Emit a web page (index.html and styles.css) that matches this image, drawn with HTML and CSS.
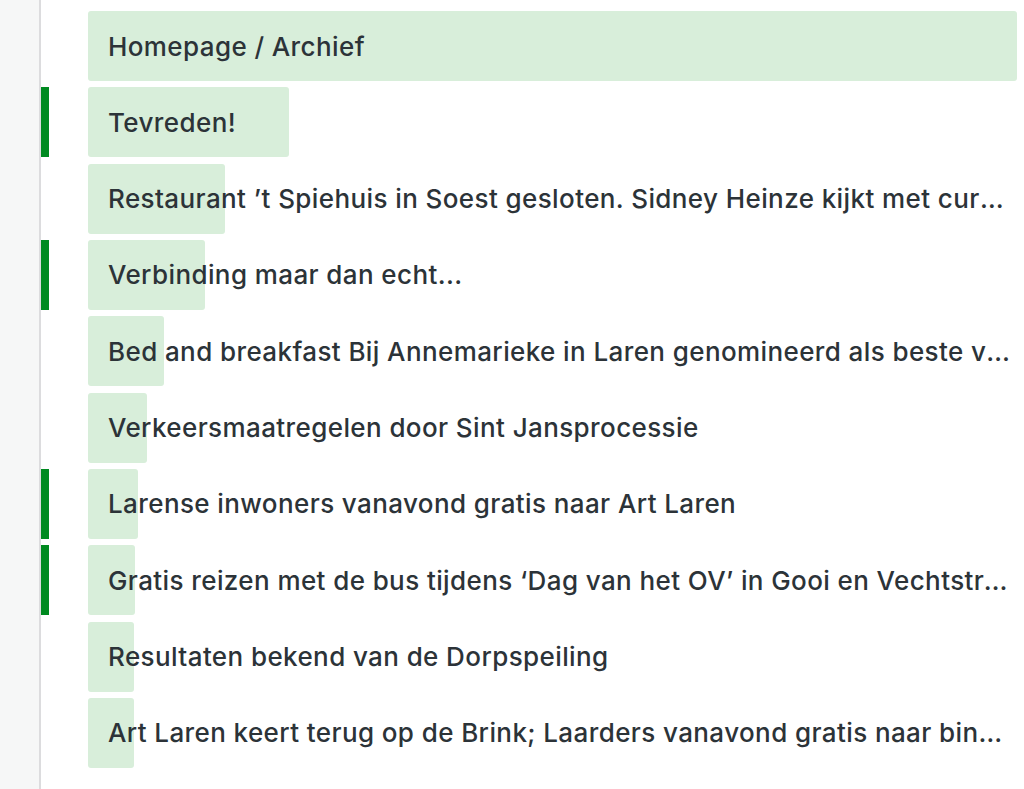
FILE: index.html
```html
<!DOCTYPE html>
<html lang="en">
<head>
    <meta charset="UTF-8">
    <title>Populaire berichten</title>
    <link rel="stylesheet" href="styles.css">
</head>
<body>
    <div class="layout">
        <div class="sidebar"></div>
        <ul class="posts">
            <li class="post">
                <span class="marker"></span>
                <div class="bar"><span class="fill" style="width: 100%"></span><span class="title">Homepage / Archief</span></div>
            </li>
            <li class="post">
                <span class="marker on"></span>
                <div class="bar"><span class="fill" style="width: 21.64%"></span><span class="title">Tevreden!</span></div>
            </li>
            <li class="post">
                <span class="marker"></span>
                <div class="bar"><span class="fill" style="width: 14.75%"></span><span class="title">Restaurant ’t Spiehuis in Soest gesloten. Sidney Heinze kijkt met curiositeit naar de toekomst</span></div>
            </li>
            <li class="post">
                <span class="marker on"></span>
                <div class="bar"><span class="fill" style="width: 12.6%"></span><span class="title">Verbinding maar dan echt...</span></div>
            </li>
            <li class="post">
                <span class="marker"></span>
                <div class="bar"><span class="fill" style="width: 8.18%"></span><span class="title">Bed and breakfast Bij Annemarieke in Laren genomineerd als beste van Nederland</span></div>
            </li>
            <li class="post">
                <span class="marker"></span>
                <div class="bar"><span class="fill" style="width: 6.35%"></span><span class="title">Verkeersmaatregelen door Sint Jansprocessie</span></div>
            </li>
            <li class="post">
                <span class="marker on"></span>
                <div class="bar"><span class="fill" style="width: 5.38%"></span><span class="title">Larense inwoners vanavond gratis naar Art Laren</span></div>
            </li>
            <li class="post">
                <span class="marker on"></span>
                <div class="bar"><span class="fill" style="width: 5.06%"></span><span class="title">Gratis reizen met de bus tijdens ‘Dag van het OV’ in Gooi en Vechtstreek</span></div>
            </li>
            <li class="post">
                <span class="marker"></span>
                <div class="bar"><span class="fill" style="width: 4.95%"></span><span class="title">Resultaten bekend van de Dorpspeiling</span></div>
            </li>
            <li class="post">
                <span class="marker"></span>
                <div class="bar"><span class="fill" style="width: 4.95%"></span><span class="title">Art Laren keert terug op de Brink; Laarders vanavond gratis naar binnen</span></div>
            </li>
        </ul>
    </div>
</body>
</html>
```

FILE: styles.css
```css
body {
    margin: 0;
    font-family: Inter, "Noto Sans", sans-serif;
    color: #2c3338;
    background: white;
}
.layout {
    display: flex;
    min-height: 789px;
}
.sidebar {
    width: 39px;
    flex-shrink: 0;
    background: #f6f7f7;
    border-right: 2px solid #dcdcde;
}
.posts {
    flex: 1;
    list-style: none;
    margin: 0;
    padding: 11px 7px 0 0;
    display: flex;
    flex-direction: column;
    gap: 6.33px;
    min-width: 0;
}
.post {
    display: flex;
    gap: 39px;
    height: 70px;
}
.marker {
    width: 8px;
    flex-shrink: 0;
}
.marker.on {
    background: #008a20;
}
.bar {
    position: relative;
    flex: 1;
    min-width: 0;
    display: flex;
    align-items: center;
}
.fill {
    position: absolute;
    top: 0;
    left: 0;
    bottom: 0;
    background: #d8eeda;
    border-radius: 3px;
}
.title {
    position: relative;
    padding: 0 7px 0 20px;
    font-size: 26px;
    font-weight: 500;
    letter-spacing: 0.4px;
    white-space: nowrap;
    overflow: hidden;
    text-overflow: ellipsis;
}
```
